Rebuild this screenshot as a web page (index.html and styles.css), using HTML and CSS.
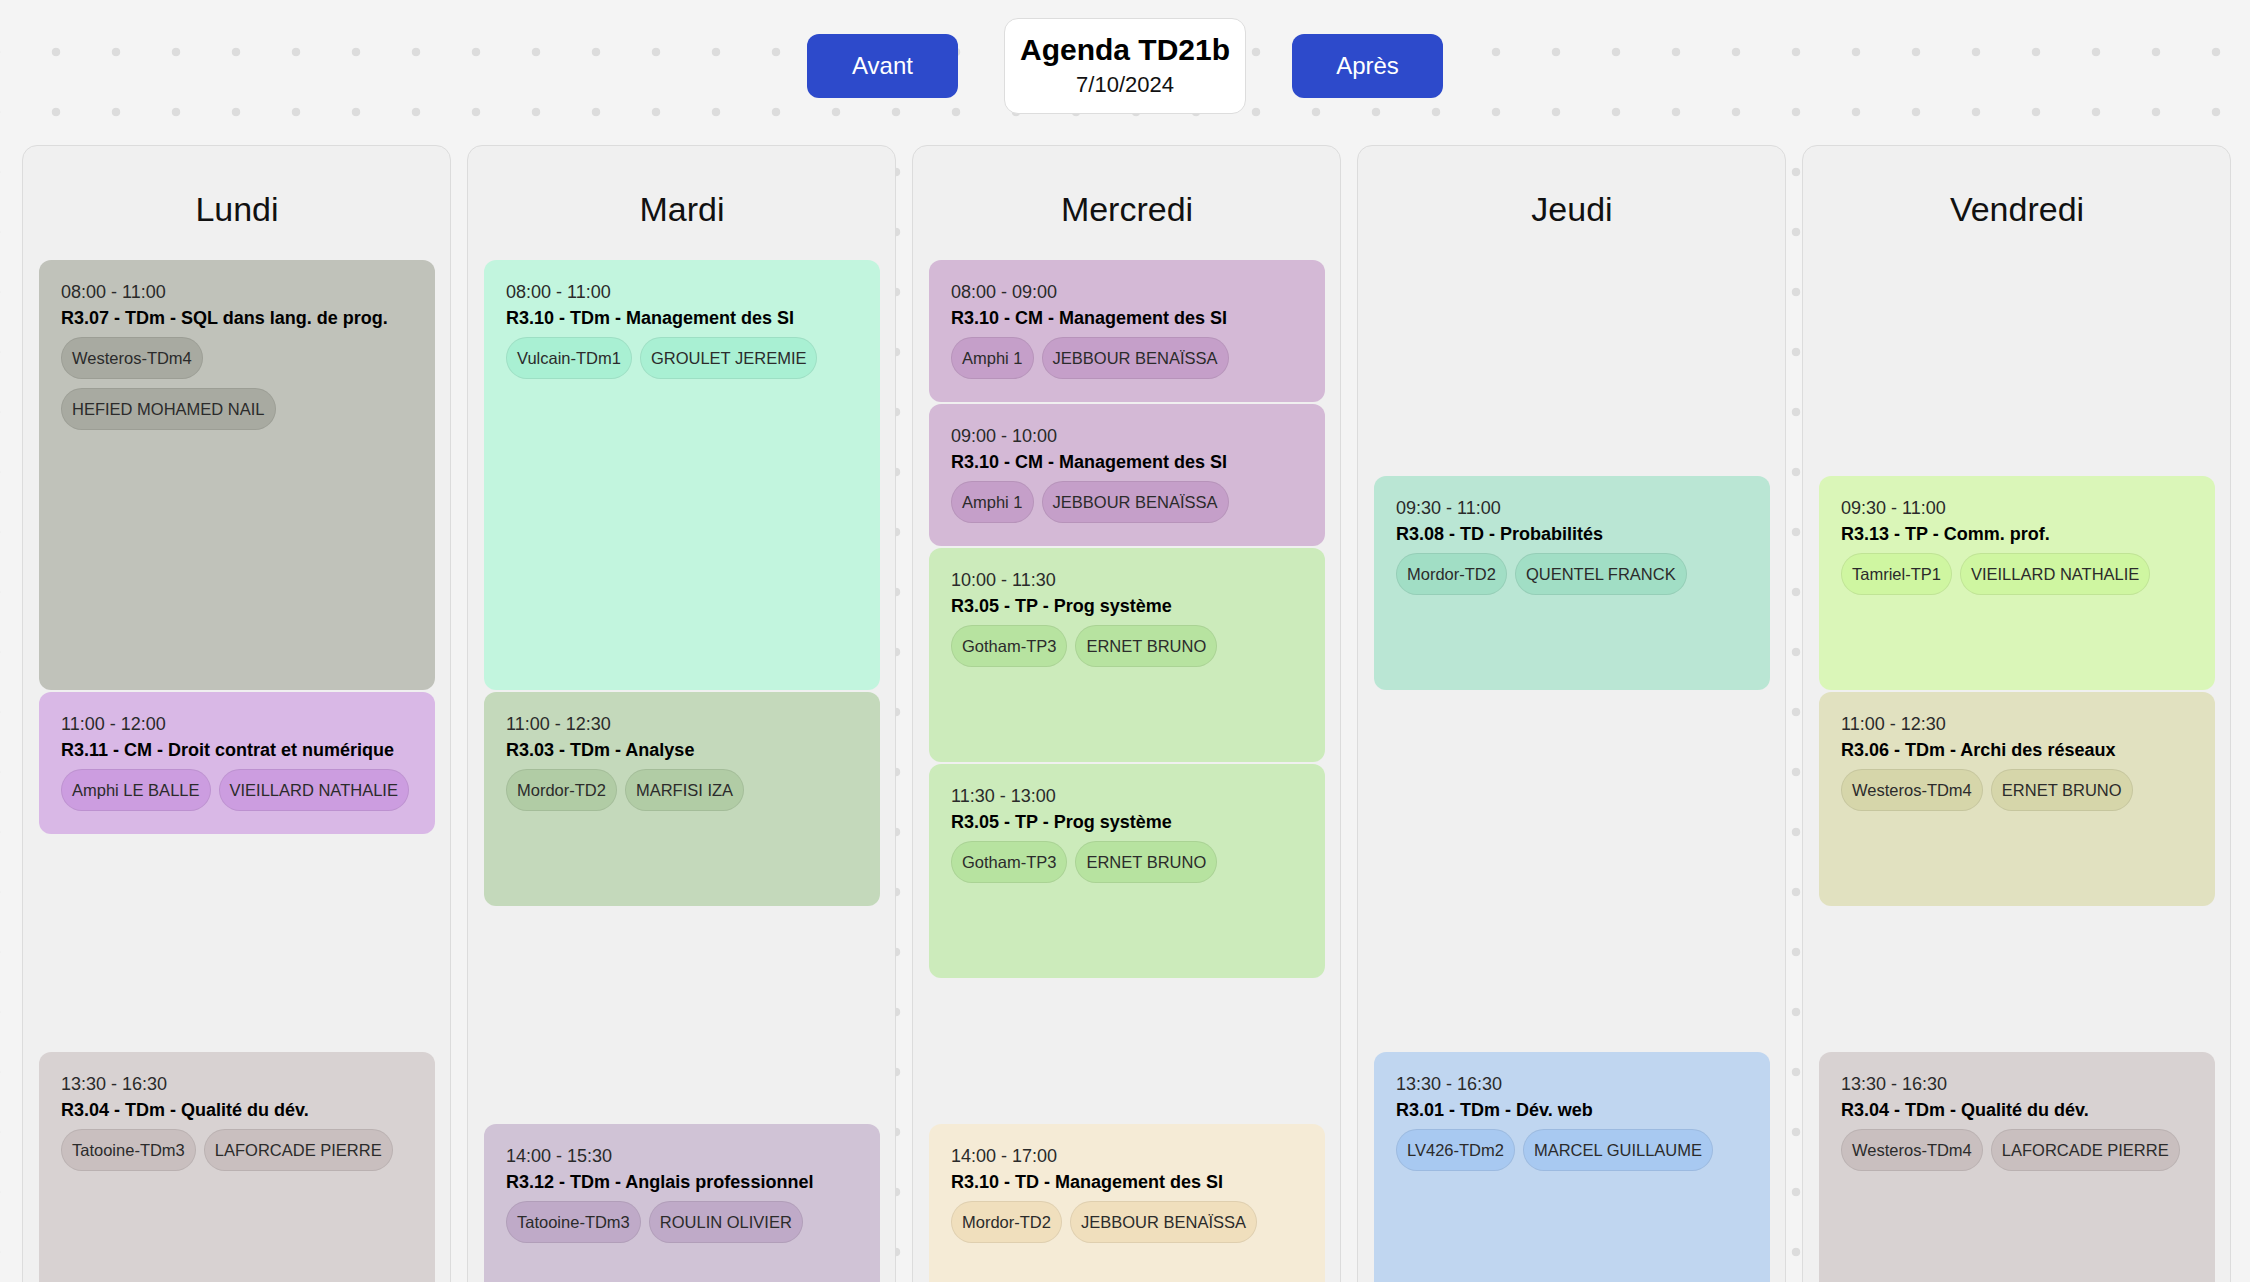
FILE: index.html
```html
<!DOCTYPE html>
<html lang="fr">
<head>
<meta charset="utf-8">
<title>Agenda TD21b</title>
<link rel="stylesheet" href="styles.css">
</head>
<body>
<header class="topbar">
  <button class="nav-btn">Avant</button>
  <div class="title-box">
    <div class="title">Agenda TD21b</div>
    <div class="date">7/10/2024</div>
  </div>
  <button class="nav-btn">Après</button>
</header>

<main class="week">
  <section class="day">
    <h2 class="day-name">Lundi</h2>
    <div class="slots">
      <article class="event ev-sql" style="grid-row: 1 / 7">
        <div class="time">08:00 - 11:00</div>
        <div class="subject">R3.07 - TDm - SQL dans lang. de prog.</div>
        <div class="chips"><span class="chip">Westeros-TDm4</span><span class="chip">HEFIED MOHAMED NAIL</span></div>
      </article>
      <article class="event ev-droit" style="grid-row: 7 / 9">
        <div class="time">11:00 - 12:00</div>
        <div class="subject">R3.11 - CM - Droit contrat et numérique</div>
        <div class="chips"><span class="chip">Amphi LE BALLE</span><span class="chip">VIEILLARD NATHALIE</span></div>
      </article>
      <article class="event ev-qualite" style="grid-row: 12 / 18">
        <div class="time">13:30 - 16:30</div>
        <div class="subject">R3.04 - TDm - Qualité du dév.</div>
        <div class="chips"><span class="chip">Tatooine-TDm3</span><span class="chip">LAFORCADE PIERRE</span></div>
      </article>
    </div>
  </section>

  <section class="day">
    <h2 class="day-name">Mardi</h2>
    <div class="slots">
      <article class="event ev-mgmt-tdm" style="grid-row: 1 / 7">
        <div class="time">08:00 - 11:00</div>
        <div class="subject">R3.10 - TDm - Management des SI</div>
        <div class="chips"><span class="chip">Vulcain-TDm1</span><span class="chip">GROULET JEREMIE</span></div>
      </article>
      <article class="event ev-analyse" style="grid-row: 7 / 10">
        <div class="time">11:00 - 12:30</div>
        <div class="subject">R3.03 - TDm - Analyse</div>
        <div class="chips"><span class="chip">Mordor-TD2</span><span class="chip">MARFISI IZA</span></div>
      </article>
      <article class="event ev-anglais" style="grid-row: 13 / 16">
        <div class="time">14:00 - 15:30</div>
        <div class="subject">R3.12 - TDm - Anglais professionnel</div>
        <div class="chips"><span class="chip">Tatooine-TDm3</span><span class="chip">ROULIN OLIVIER</span></div>
      </article>
    </div>
  </section>

  <section class="day">
    <h2 class="day-name">Mercredi</h2>
    <div class="slots">
      <article class="event ev-mgmt-cm" style="grid-row: 1 / 3">
        <div class="time">08:00 - 09:00</div>
        <div class="subject">R3.10 - CM - Management des SI</div>
        <div class="chips"><span class="chip">Amphi 1</span><span class="chip">JEBBOUR BENAÏSSA</span></div>
      </article>
      <article class="event ev-mgmt-cm" style="grid-row: 3 / 5">
        <div class="time">09:00 - 10:00</div>
        <div class="subject">R3.10 - CM - Management des SI</div>
        <div class="chips"><span class="chip">Amphi 1</span><span class="chip">JEBBOUR BENAÏSSA</span></div>
      </article>
      <article class="event ev-prog" style="grid-row: 5 / 8">
        <div class="time">10:00 - 11:30</div>
        <div class="subject">R3.05 - TP - Prog système</div>
        <div class="chips"><span class="chip">Gotham-TP3</span><span class="chip">ERNET BRUNO</span></div>
      </article>
      <article class="event ev-prog" style="grid-row: 8 / 11">
        <div class="time">11:30 - 13:00</div>
        <div class="subject">R3.05 - TP - Prog système</div>
        <div class="chips"><span class="chip">Gotham-TP3</span><span class="chip">ERNET BRUNO</span></div>
      </article>
      <article class="event ev-mgmt-td" style="grid-row: 13 / 19">
        <div class="time">14:00 - 17:00</div>
        <div class="subject">R3.10 - TD - Management des SI</div>
        <div class="chips"><span class="chip">Mordor-TD2</span><span class="chip">JEBBOUR BENAÏSSA</span></div>
      </article>
    </div>
  </section>

  <section class="day">
    <h2 class="day-name">Jeudi</h2>
    <div class="slots">
      <article class="event ev-proba" style="grid-row: 4 / 7">
        <div class="time">09:30 - 11:00</div>
        <div class="subject">R3.08 - TD - Probabilités</div>
        <div class="chips"><span class="chip">Mordor-TD2</span><span class="chip">QUENTEL FRANCK</span></div>
      </article>
      <article class="event ev-web" style="grid-row: 12 / 18">
        <div class="time">13:30 - 16:30</div>
        <div class="subject">R3.01 - TDm - Dév. web</div>
        <div class="chips"><span class="chip">LV426-TDm2</span><span class="chip">MARCEL GUILLAUME</span></div>
      </article>
    </div>
  </section>

  <section class="day">
    <h2 class="day-name">Vendredi</h2>
    <div class="slots">
      <article class="event ev-comm" style="grid-row: 4 / 7">
        <div class="time">09:30 - 11:00</div>
        <div class="subject">R3.13 - TP - Comm. prof.</div>
        <div class="chips"><span class="chip">Tamriel-TP1</span><span class="chip">VIEILLARD NATHALIE</span></div>
      </article>
      <article class="event ev-archi" style="grid-row: 7 / 10">
        <div class="time">11:00 - 12:30</div>
        <div class="subject">R3.06 - TDm - Archi des réseaux</div>
        <div class="chips"><span class="chip">Westeros-TDm4</span><span class="chip">ERNET BRUNO</span></div>
      </article>
      <article class="event ev-qualite" style="grid-row: 12 / 18">
        <div class="time">13:30 - 16:30</div>
        <div class="subject">R3.04 - TDm - Qualité du dév.</div>
        <div class="chips"><span class="chip">Westeros-TDm4</span><span class="chip">LAFORCADE PIERRE</span></div>
      </article>
    </div>
  </section>
</main>
</body>
</html>
```

FILE: styles.css
```css
html, body {
  margin: 0;
  padding: 0;
}

body {
  font-family: "Liberation Sans", Arial, sans-serif;
  color: #111;
  background-color: #f4f4f4;
  background-image: radial-gradient(circle, #dcdcdc 4px, rgba(220,220,220,0) 4.6px);
  background-size: 60px 60px;
  background-position: 26px 22px;
}

.topbar {
  display: flex;
  justify-content: center;
  align-items: center;
  gap: 46px;
  padding-top: 18px;
  margin-bottom: 31px;
}

.nav-btn {
  width: 151px;
  height: 64px;
  border: none;
  border-radius: 12px;
  background: #2d4acb;
  color: #fff;
  font-family: "Liberation Sans", Arial, sans-serif;
  font-size: 24px;
  padding: 0;
  cursor: pointer;
}

.title-box {
  background: #fff;
  border: 1px solid #dddddd;
  border-radius: 14px;
  padding: 14px 15px 15px;
  text-align: center;
}

.title {
  font-size: 30px;
  font-weight: bold;
  color: #000;
  margin-bottom: 5px;
}

.date {
  font-size: 22px;
  color: #111;
}

.week {
  display: grid;
  grid-template-columns: repeat(5, 1fr);
  gap: 16px;
  padding: 0 19px 0 22px;
  align-items: start;
}

.day {
  background: #f0f0f0;
  border: 1px solid #dcdcdc;
  border-radius: 15px;
  padding: 0 15px 0 16px;
  min-width: 0;
}

.day-name {
  margin: 0 0 31px;
  padding-top: 44px;
  font-size: 34px;
  line-height: 39px;
  font-weight: normal;
  text-align: center;
  color: #111;
}

.slots {
  display: grid;
  grid-template-columns: 1fr;
  grid-template-rows: repeat(20, 72px);
}

.event {
  grid-column: 1;
  margin-bottom: 2px;
  border-radius: 12px;
  padding: 22px;
  overflow: hidden;
  min-height: 0;
}

.time {
  font-size: 18px;
  color: #2a2a2a;
}

.subject {
  margin-top: 5px;
  font-size: 18px;
  font-weight: bold;
  color: #000;
}

.chips {
  margin-top: 8px;
  display: flex;
  flex-wrap: wrap;
  gap: 9px 8px;
}

.chip {
  display: inline-block;
  font-size: 16.5px;
  line-height: 19px;
  padding: 10.5px 10px;
  border: 1px solid rgba(0, 0, 0, 0.07);
  border-radius: 22px;
  color: #2b2b2b;
  white-space: nowrap;
}

/* Course colours */
.ev-sql { background: #c0c2ba; }
.ev-sql .chip { background: #a8aaa1; }

.ev-droit { background: #d9b8e6; }
.ev-droit .chip { background: #cc9de0; }

.ev-qualite { background: #d8d2d2; }
.ev-qualite .chip { background: #c9bfbf; }

.ev-mgmt-tdm { background: #c2f5de; }
.ev-mgmt-tdm .chip { background: #a9f0d3; }

.ev-analyse { background: #c4d9bb; }
.ev-analyse .chip { background: #b1cca5; }

.ev-anglais { background: #d0c3d6; }
.ev-anglais .chip { background: #bfaac8; }

.ev-mgmt-cm { background: #d4b9d6; }
.ev-mgmt-cm .chip { background: #c59fc9; }

.ev-prog { background: #ccebbb; }
.ev-prog .chip { background: #b7e3a0; }

.ev-mgmt-td { background: #f5ebd6; }
.ev-mgmt-td .chip { background: #f0dfbd; }

.ev-proba { background: #bae6d4; }
.ev-proba .chip { background: #a1dec5; }

.ev-web { background: #c0d6f0; }
.ev-web .chip { background: #a8c9f1; }

.ev-comm { background: #daf6b8; }
.ev-comm .chip { background: #cff6a1; }

.ev-archi { background: #e1e1c0; }
.ev-archi .chip { background: #d6d6aa; }
```
